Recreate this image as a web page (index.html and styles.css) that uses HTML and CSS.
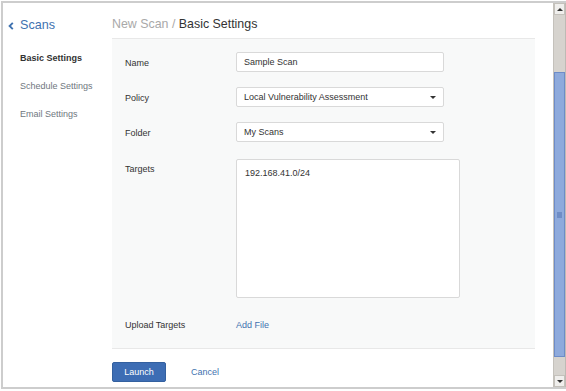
FILE: index.html
```html
<!DOCTYPE html>
<html>
<head>
<meta charset="utf-8">
<link rel="stylesheet" href="styles.css">
</head>
<body>
<div class="window">
  <div class="page">
    <aside class="sidebar">
      <a class="back"><svg class="chev" width="6" height="8" viewBox="0 0 6 8"><path d="M4.8 0.8 L1.6 4 L4.8 7.2" fill="none" stroke="#3f72b0" stroke-width="1.9"/></svg><span>Scans</span></a>
      <nav class="nav">
        <div class="nav-item active">Basic Settings</div>
        <div class="nav-item">Schedule Settings</div>
        <div class="nav-item">Email Settings</div>
      </nav>
    </aside>
    <main class="main">
      <h1 class="title"><span class="crumb">New Scan / </span>Basic Settings</h1>
      <section class="panel">
        <div class="row">
          <label class="label">Name</label>
          <div class="input">Sample Scan</div>
        </div>
        <div class="row">
          <label class="label">Policy</label>
          <div class="input select">Local Vulnerability Assessment<span class="caret"></span></div>
        </div>
        <div class="row">
          <label class="label">Folder</label>
          <div class="input select">My Scans<span class="caret"></span></div>
        </div>
        <div class="row row-top targets-row">
          <label class="label">Targets</label>
          <div class="textarea">192.168.41.0/24</div>
        </div>
        <div class="row upload-row">
          <label class="label">Upload Targets</label>
          <a class="link">Add File</a>
        </div>
      </section>
      <div class="actions">
        <button class="btn">Launch</button>
        <a class="link cancel">Cancel</a>
      </div>
    </main>
  </div>
  <div class="scrollbar">
    <div class="sb-btn"><span class="arrow up"></span></div>
    <div class="sb-track">
      <div class="sb-thumb"><span class="grip"></span></div>
    </div>
    <div class="sb-btn"><span class="arrow down"></span></div>
  </div>
</div>
</body>
</html>
```

FILE: styles.css
```css
* { box-sizing: border-box; }
html, body { margin: 0; padding: 0; background: #fff; }
body {
  font-family: "Liberation Sans", Arial, sans-serif;
  font-size: 9px;
  color: #333;
}
.window {
  margin: 1px 0 0 1px;
  width: 565px;
  height: 388px;
  border: 2px solid #cdcdcd;
  border-right: none;
  display: flex;
  overflow: hidden;
}
.page {
  flex: 1;
  display: flex;
  min-width: 0;
}
.sidebar {
  width: 109px;
  flex: none;
  padding-top: 12px;
}
.back {
  display: flex;
  align-items: center;
  height: 20px;
  padding-left: 5px;
  color: #3f72b0;
  font-size: 12.6px;
}
.chev { margin-right: 6px; margin-top: 1px; }
.nav { margin-top: 9px; padding-left: 17px; }
.nav-item {
  line-height: 28px;
  height: 28px;
  color: #6f7780;
}
.nav-item.active { color: #333; font-weight: bold; }

.main {
  flex: 1;
  padding-right: 18px;
  display: flex;
  flex-direction: column;
}
.title {
  margin: 0;
  height: 35px;
  padding-top: 11px;
  line-height: 20px;
  font-size: 12.4px;
  font-weight: normal;
  color: #333;
}
.crumb { color: #a9a9a9; }
.panel {
  background: #f8f9f9;
  border-top: 1px solid #e8e8e8;
  border-bottom: 1px solid #e8e8e8;
  padding: 13px 0 14px 13px;
  display: flex;
  flex-direction: column;
  gap: 15px;
}
.row {
  display: flex;
  align-items: flex-start;
  height: 20px;
}
.targets-row { margin-top: 2px; height: auto; }
.upload-row { margin-top: 1px; }
.label {
  width: 111px;
  flex: none;
  height: 20px;
  line-height: 18px;
  padding-top: 2px;
  color: #333;
}
.targets-row .label { padding-top: 1px; }
.input {
  width: 208px;
  height: 20px;
  line-height: 17px;
  padding: 1px 7px 0;
  background: #fff;
  border: 1px solid #d9d9d9;
  border-radius: 2px;
  color: #333;
  position: relative;
}
.caret {
  position: absolute;
  right: 7px;
  top: 8px;
  width: 0;
  height: 0;
  border-left: 3px solid transparent;
  border-right: 3px solid transparent;
  border-top: 3.5px solid #333;
}
.textarea {
  width: 224px;
  height: 139px;
  background: #fff;
  border: 1px solid #d9d9d9;
  border-radius: 2px;
  padding: 7px 8px;
  line-height: 12px;
  color: #333;
}
.link { color: #3f72b0; }
.upload-row .link { display: block; height: 20px; line-height: 18px; padding-top: 2px; }
.actions {
  display: flex;
  align-items: center;
  margin-top: 13px;
}
.btn {
  width: 54px;
  height: 20px;
  padding: 0;
  border: 1px solid #33609f;
  border-radius: 2px;
  background: #3d6db4;
  color: #fff;
  font-family: "Liberation Sans", Arial, sans-serif;
  font-size: 9px;
}
.cancel { margin-left: 25px; }

.scrollbar {
  width: 13px;
  flex: none;
  display: flex;
  flex-direction: column;
  background: #d6d3ce;
  border-left: 1px solid #c4c1bb;
  border-right: 1px solid #bdbab4;
}
.sb-btn {
  height: 12px;
  flex: none;
  background: #f0efed;
  border: 1px solid #c4c1bb;
  display: flex;
  align-items: center;
  justify-content: center;
}
.arrow {
  width: 0; height: 0;
  border-left: 3px solid transparent;
  border-right: 3px solid transparent;
}
.arrow.up { border-bottom: 3px solid #333; }
.arrow.down { border-top: 3px solid #333; }
.sb-track {
  flex: 1;
  padding-top: 57px;
}
.sb-thumb {
  height: 285px;
  background: #8eaadc;
  border: 1px solid #6d8cc8;
  display: flex;
  align-items: center;
  justify-content: center;
}
.grip {
  width: 5px;
  height: 6px;
  background: #6f8dc6;
}
```
